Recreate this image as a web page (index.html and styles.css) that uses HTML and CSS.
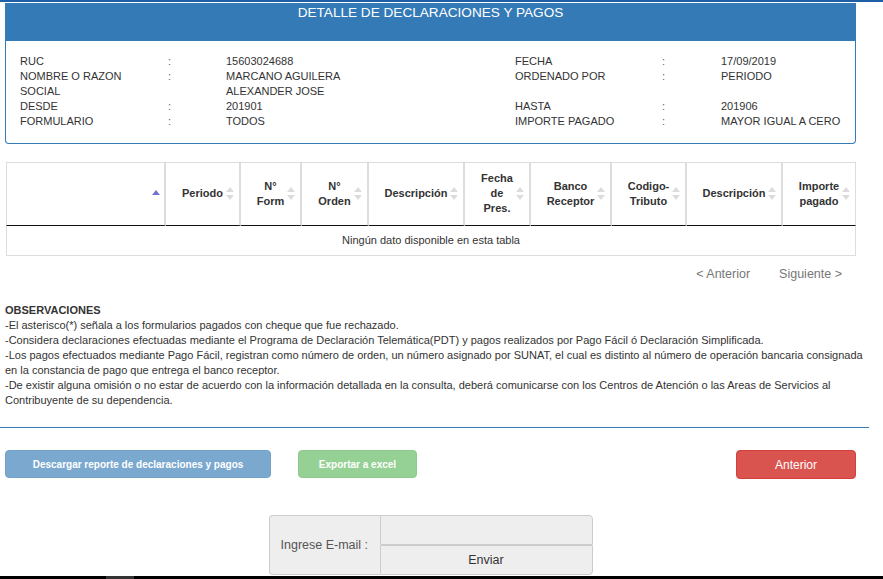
FILE: index.html
```html
<!DOCTYPE html>
<html lang="es">
<head>
<meta charset="utf-8">
<title>Detalle de declaraciones y pagos</title>
<link rel="stylesheet" href="styles.css">
</head>
<body>
<div class="topline"></div>

<section class="panel">
  <div class="panel-heading">DETALLE DE DECLARACIONES Y PAGOS</div>
  <div class="panel-body">
    <table class="info">
      <colgroup>
        <col class="c-label"><col class="c-sep"><col class="c-value">
        <col class="c-label2"><col class="c-sep2"><col>
      </colgroup>
      <tr><td>RUC</td><td class="sep">:</td><td>15603024688</td><td>FECHA</td><td class="sep">:</td><td>17/09/2019</td></tr>
      <tr><td>NOMBRE O RAZON<br>SOCIAL</td><td class="sep">:</td><td>MARCANO AGUILERA<br>ALEXANDER JOSE</td><td>ORDENADO POR</td><td class="sep">:</td><td>PERIODO</td></tr>
      <tr><td>DESDE</td><td class="sep">:</td><td>201901</td><td>HASTA</td><td class="sep">:</td><td>201906</td></tr>
      <tr><td>FORMULARIO</td><td class="sep">:</td><td>TODOS</td><td>IMPORTE PAGADO</td><td class="sep">:</td><td>MAYOR IGUAL A CERO</td></tr>
    </table>
  </div>
</section>

<table class="grid">
  <thead>
    <tr>
      <th class="w1 asc"></th>
      <th class="w2 sort">Periodo</th>
      <th class="w3 sort">N°<br>Form</th>
      <th class="w4 sort">N°<br>Orden</th>
      <th class="w5 sort">Descripción</th>
      <th class="w6 sort">Fecha<br>de<br>Pres.</th>
      <th class="w7 sort">Banco<br>Receptor</th>
      <th class="w8 sort">Codigo-<br>Tributo</th>
      <th class="w9 sort">Descripción</th>
      <th class="w10 sort">Importe<br>pagado</th>
    </tr>
  </thead>
  <tbody>
    <tr><td colspan="10" class="empty">Ningún dato disponible en esta tabla</td></tr>
  </tbody>
</table>

<nav class="pager">
  <a class="pager-link">&lt; Anterior</a>
  <a class="pager-link">Siguiente &gt;</a>
</nav>

<div class="obs">
  <strong class="obs-title">OBSERVACIONES</strong><br>
  -El asterisco(*) señala a los formularios pagados con cheque que fue rechazado.<br>
  -Considera declaraciones efectuadas mediante el Programa de Declaración Telemática(PDT) y pagos realizados por Pago Fácil ó Declaración Simplificada.<br>
  -Los pagos efectuados mediante Pago Fácil, registran como número de orden, un número asignado por SUNAT, el cual es distinto al número de operación bancaria consignada<br>
  en la constancia de pago que entrega el banco receptor.<br>
  -De existir alguna omisión o no estar de acuerdo con la información detallada en la consulta, deberá comunicarse con los Centros de Atención o las Areas de Servicios al<br>
  Contribuyente de su dependencia.
</div>

<hr class="rule">

<div class="actions">
  <button class="btn btn-blue">Descargar reporte de declaraciones y pagos</button>
  <button class="btn btn-green">Exportar a excel</button>
  <button class="btn btn-red">Anterior</button>
</div>

<div class="mail-wrap">
  <div class="mail">
    <div class="mail-label">Ingrese E-mail :</div>
    <input class="mail-input" type="text">
    <button class="mail-send">Enviar</button>
  </div>
</div>

<div class="bottombar"><span class="bottombar-seg"></span></div>
</body>
</html>
```

FILE: styles.css
```css
html { overflow: hidden; }
body {
  margin: 0;
  font-family: "Liberation Sans", Arial, sans-serif;
  font-size: 11px;
  line-height: 15px;
  color: #333;
  background: #fff;
}

.topline {
  height: 2px;
  background: #1f5fa5;
  margin-bottom: 1px;
}

.panel {
  margin: 0 27px 0 5px;
  border: 1px solid #337ab7;
  border-top: 0;
  border-radius: 0 0 4px 4px;
}
.panel-heading {
  height: 38px;
  box-sizing: border-box;
  background: #337ab7;
  color: #fff;
  font-size: 13.6px;
  line-height: 20px;
  text-align: center;
  padding-top: 0;
  margin: 0 -1px;
}
.panel-body {
  padding: 13px 14px 14px 14px;
}
.info {
  width: 821px;
  table-layout: fixed;
  border-collapse: collapse;
}
.info td {
  padding: 0;
  vertical-align: top;
  line-height: 15px;
}
.info .sep { color: #6a5a78; }
.c-label { width: 148px; }
.c-sep { width: 58px; }
.c-value { width: 289px; }
.c-label2 { width: 147px; }
.c-sep2 { width: 59px; }

.grid {
  margin: 18px 0 0 6px;
  width: 850px;
  table-layout: fixed;
  border-collapse: separate;
  border-spacing: 0;
}
.grid th {
  position: relative;
  box-sizing: border-box;
  padding: 8px 14px 9px;
  border-top: 1px solid #ddd;
  border-right: 2px solid #ddd;
  border-bottom: 1px solid #111;
  font-weight: bold;
  text-align: center;
  vertical-align: middle;
  line-height: 15px;
  height: 64px;
}
.grid th.w1 { border-left: 1px solid #ddd; width: 160px; }
.grid th.w2 { width: 75px; }
.grid th.w3 { width: 61px; }
.grid th.w4 { width: 67px; }
.grid th.w5 { width: 96px; }
.grid th.w6 { width: 66px; }
.grid th.w7 { width: 81px; }
.grid th.w8 { width: 75px; }
.grid th.w9 { width: 96px; }
.grid th.w10 { width: 73px; border-right: 1px solid #ddd; }

.grid th.sort::before,
.grid th.sort::after,
.grid th.asc::before {
  content: "";
  position: absolute;
  right: 5px;
  width: 0;
  height: 0;
  border-left: 4px solid transparent;
  border-right: 4px solid transparent;
}
.grid th.sort::before {
  top: calc(50% - 7px);
  border-bottom: 5px solid #dcdcdc;
}
.grid th.sort::after {
  top: calc(50% + 1px);
  border-top: 5px solid #dcdcdc;
}
.grid th.asc::before {
  right: 4px;
  top: calc(50% - 4px);
  border-bottom: 5px solid #7373d6;
}
.grid td.empty {
  text-align: center;
  padding: 7px 0;
  line-height: 15px;
  border-left: 1px solid #ddd;
  border-right: 1px solid #ddd;
  border-bottom: 1px solid #ddd;
}

.pager {
  display: flex;
  justify-content: flex-end;
  gap: 29px;
  margin: 9px 41px 0 0;
}
.pager-link {
  font-size: 12.5px;
  line-height: 18px;
  color: #777;
}

.obs {
  margin: 20px 0 0 5px;
  white-space: nowrap;
  line-height: 15px;
}
.obs-title { font-weight: bold; }

.rule {
  margin: 19px 14px 0 0;
  border: 0;
  height: 1px;
  background: #337ab7;
}

.actions {
  display: flex;
  align-items: flex-start;
  margin: 22px 27px 0 5px;
}
.btn {
  font-family: "Liberation Sans", Arial, sans-serif;
  color: #fff;
  border-radius: 4px;
  height: 28px;
  padding: 0;
  cursor: pointer;
}
.btn-blue {
  width: 266px;
  background: #7aa8cf;
  border: 1px solid #73a2cb;
  font-size: 10px;
  font-weight: bold;
}
.btn-green {
  width: 119px;
  margin-left: 27px;
  background: #95d195;
  border: 1px solid #8ccb8c;
  font-size: 10px;
  font-weight: bold;
}
.btn-red {
  width: 120px;
  height: 29px;
  margin-left: auto;
  background: #d9534f;
  border: 1px solid #d43f3a;
  font-size: 12px;
}

.mail-wrap {
  display: flex;
  justify-content: center;
  margin: 36px 27px 0 5px;
}
.mail {
  display: grid;
  grid-template-columns: 111px 213px;
  grid-template-rows: 30px 30px;
}
.mail-label {
  grid-row: 1 / 3;
  display: flex;
  align-items: center;
  padding-left: 11px;
  background: #eee;
  border: 1px solid #ccc;
  border-right: 0;
  border-radius: 4px 0 0 4px;
  font-size: 12.5px;
  color: #555;
}
.mail-input {
  box-sizing: border-box;
  width: 213px;
  height: 30px;
  margin: 0;
  background: #eee;
  border: 1px solid #ccc;
  border-radius: 0 4px 0 0;
  padding: 0 8px;
}
.mail-send {
  box-sizing: border-box;
  width: 213px;
  height: 30px;
  margin: 0;
  background: #eee;
  border: 1px solid #ccc;
  border-radius: 0 0 4px 0;
  font-family: "Liberation Sans", Arial, sans-serif;
  font-size: 12.5px;
  color: #333;
}

.bottombar {
  margin-top: 1px;
  height: 3px;
  background: #000;
  display: flex;
}
.bottombar-seg {
  margin-left: 106px;
  width: 28px;
  background: #333;
}
```
